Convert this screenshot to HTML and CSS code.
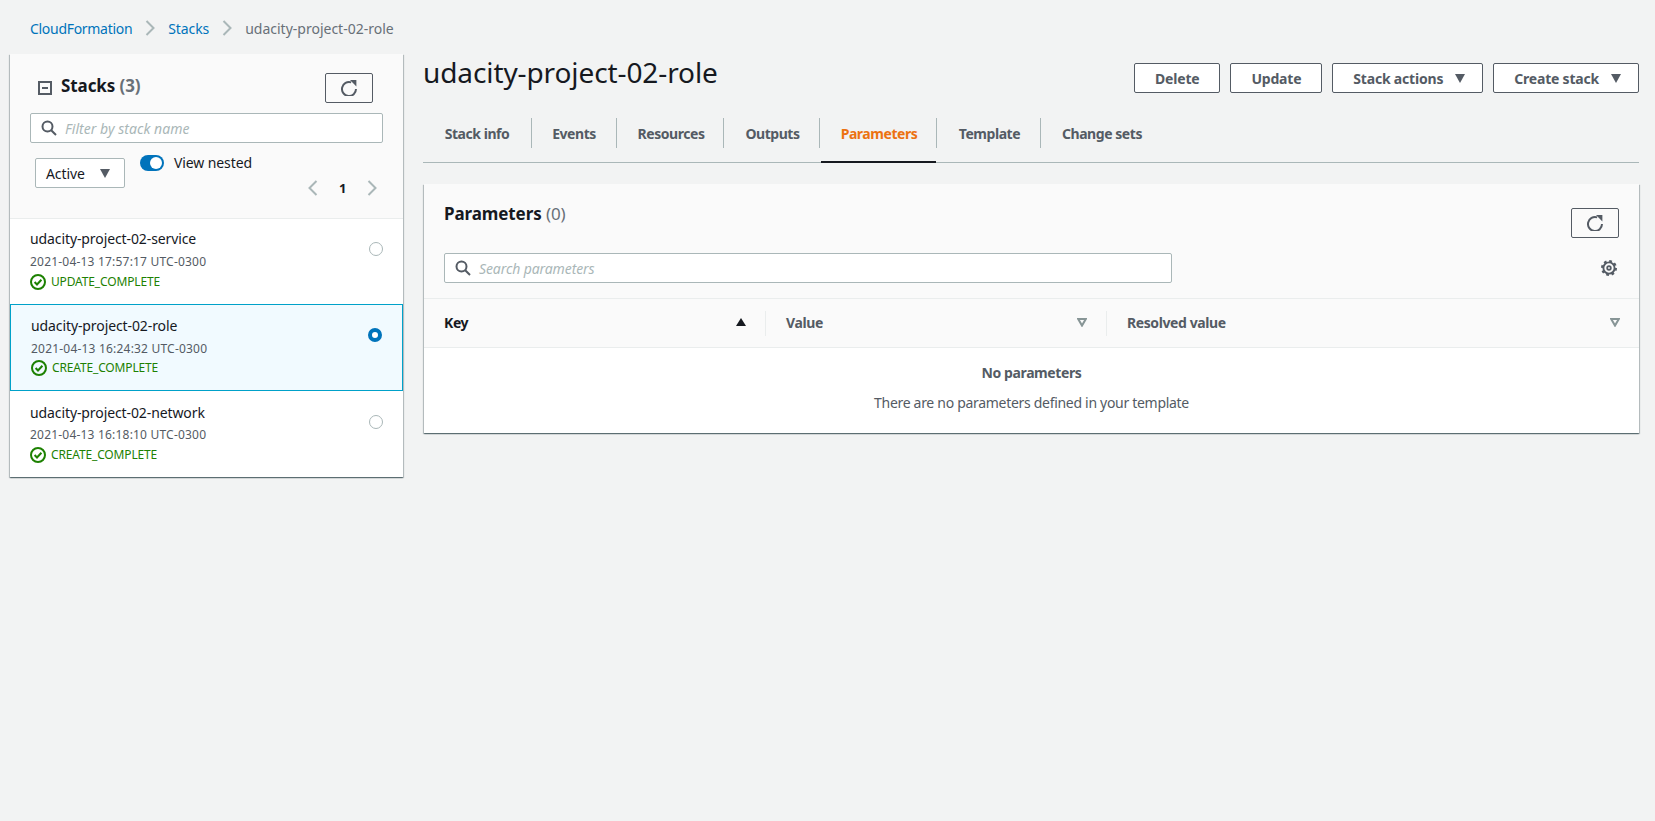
FILE: index.html
```html
<!DOCTYPE html>
<html>

  <head>

    <title>
      udacity-project-02-role
    </title>

    <link rel="stylesheet" href="styles.css">

  </head>

  <body>

    <svg class="defs" width="0" height="0">
      <symbol id="refresh" viewBox="0 0 16 16">
        <path d="M15 9A7 7 0 1 1 10.2 2.4" fill="none" stroke="currentColor" stroke-width="2"/>
        <path d="M9 0h6.4v6.4z" fill="currentColor"/>
      </symbol>
      <symbol id="search" viewBox="0 0 16 16">
        <circle cx="6.5" cy="6.5" r="5" fill="none" stroke="currentColor" stroke-width="2"/>
        <path d="M10.2 10.2L15 15" fill="none" stroke="currentColor" stroke-width="2"/>
      </symbol>
      <symbol id="caret" viewBox="0 0 10 9">
        <path d="M0 0h10L5 9z" fill="currentColor"/>
      </symbol>
      <symbol id="sort" viewBox="0 0 10 9">
        <path d="M1.2 1h7.6L5 7.6z" fill="none" stroke="currentColor" stroke-width="2"/>
      </symbol>
      <symbol id="check" viewBox="0 0 16 16">
        <circle cx="8" cy="8" r="7" fill="none" stroke="currentColor" stroke-width="2"/>
        <path d="M4.6 8l2.4 2.5 4.4-4.7" fill="none" stroke="currentColor" stroke-width="2"/>
      </symbol>
      <symbol id="gear" viewBox="0 0 16 16">
        <circle cx="8" cy="8" r="1.8" fill="none" stroke="currentColor" stroke-width="1.8"/>
        <circle cx="8" cy="8" r="5.6" fill="none" stroke="currentColor" stroke-width="1.9"/>
        <circle cx="8" cy="8" r="6.9" fill="none" stroke="currentColor" stroke-width="2.2" stroke-dasharray="2.7 2.72"/>
      </symbol>
      <symbol id="chevron" viewBox="0 0 10 16">
        <path d="M1.5 1l7 7-7 7" fill="none" stroke="currentColor" stroke-width="2"/>
      </symbol>
    </svg>

    <nav class="breadcrumb">
      <a href="#">CloudFormation</a>
      <svg class="crumbArrow"><use href="#chevron"/></svg>
      <a href="#">Stacks</a>
      <svg class="crumbArrow"><use href="#chevron"/></svg>
      <span>udacity-project-02-role</span>
    </nav>

    <div class="page">

      <aside class="stackPanel">

        <div class="stackHeader">

          <div class="stackTitleRow">
            <span class="collapseBox"></span>
            <h2 class="cardTitle">Stacks <span class="count">(3)</span></h2>
            <button class="btn iconBtn stackRefresh"><svg class="icon16"><use href="#refresh"/></svg></button>
          </div>

          <div class="searchBox stackSearch">
            <svg class="icon16"><use href="#search"/></svg>
            <span>Filter by stack name</span>
          </div>

          <div class="stackControls">
            <div class="select">Active <svg class="caret"><use href="#caret"/></svg></div>
            <span class="toggle"><span class="knob"></span></span>
            <span class="toggleLabel">View nested</span>
            <div class="pager">
              <svg class="pagerArrow flip"><use href="#chevron"/></svg>
              <b>1</b>
              <svg class="pagerArrow"><use href="#chevron"/></svg>
            </div>
          </div>

        </div>

        <div class="stackRow">
          <div class="stackText">
            <div class="stackName">udacity-project-02-service</div>
            <div class="stackDate">2021-04-13 17:57:17 UTC-0300</div>
            <div class="stackStatus"><svg class="icon16"><use href="#check"/></svg>UPDATE_COMPLETE</div>
          </div>
          <span class="radio"></span>
        </div>

        <div class="stackRow selected">
          <div class="stackText">
            <div class="stackName">udacity-project-02-role</div>
            <div class="stackDate">2021-04-13 16:24:32 UTC-0300</div>
            <div class="stackStatus"><svg class="icon16"><use href="#check"/></svg>CREATE_COMPLETE</div>
          </div>
          <span class="radio"></span>
        </div>

        <div class="stackRow lastRow">
          <div class="stackText">
            <div class="stackName">udacity-project-02-network</div>
            <div class="stackDate">2021-04-13 16:18:10 UTC-0300</div>
            <div class="stackStatus"><svg class="icon16"><use href="#check"/></svg>CREATE_COMPLETE</div>
          </div>
          <span class="radio"></span>
        </div>

      </aside>

      <main class="detail">

        <div class="detailHead">
          <h1>udacity-project-02-role</h1>
          <div class="actions">
            <button class="btn">Delete</button>
            <button class="btn">Update</button>
            <button class="btn">Stack actions <svg class="caret"><use href="#caret"/></svg></button>
            <button class="btn">Create stack <svg class="caret"><use href="#caret"/></svg></button>
          </div>
        </div>

        <div class="tabs">
          <a class="tab tabInfo" href="#">Stack info</a>
          <a class="tab tabEvents" href="#">Events</a>
          <a class="tab tabResources" href="#">Resources</a>
          <a class="tab tabOutputs" href="#">Outputs</a>
          <a class="tab tabParameters active" href="#">Parameters</a>
          <a class="tab tabTemplate" href="#">Template</a>
          <a class="tab tabChanges" href="#">Change sets</a>
        </div>

        <section class="card">

          <div class="cardHead">
            <div class="cardHeadTop">
              <h2 class="cardTitle">Parameters <span class="count">(0)</span></h2>
              <button class="btn iconBtn"><svg class="icon16"><use href="#refresh"/></svg></button>
            </div>
            <div class="cardHeadTools">
              <div class="searchBox paramSearch">
                <svg class="icon16"><use href="#search"/></svg>
                <span>Search parameters</span>
              </div>
              <svg class="gear"><use href="#gear"/></svg>
            </div>
          </div>

          <div class="tableHead">
            <div class="col colKey"><span class="keyLabel">Key</span><span class="sortUp"></span></div>
            <div class="col colValue"><span>Value</span><svg class="sortIcon"><use href="#sort"/></svg></div>
            <div class="col colResolved"><span>Resolved value</span><svg class="sortIcon"><use href="#sort"/></svg></div>
          </div>

          <div class="empty">
            <b>No parameters</b>
            <p>There are no parameters defined in your template</p>
          </div>

        </section>

      </main>

    </div>

  </body>

</html>
```

FILE: styles.css
```css
*
{
  box-sizing: border-box;
}

body
{
  margin: 0;
  min-height: 821px;
  background: #f2f3f3;
  color: #16191f;
  font-family: "Noto Sans", sans-serif;
  font-size: 14px;
  letter-spacing: -0.1px;
}

h1, h2, p
{
  margin: 0;
  font-weight: normal;
}

a
{
  text-decoration: none;
}

b
{
  letter-spacing: -0.4px;
}

.defs
{
  display: block;
  height: 0;
}

.icon16
{
  width: 16px;
  height: 16px;
  flex: none;
}

.breadcrumb
{
  display: flex;
  align-items: center;
  height: 54px;
  padding: 2px 0 0 30px;
  color: #687078;
}

.breadcrumb a
{
  color: #0073bb;
}

.breadcrumb a:first-child
{
  letter-spacing: -0.3px;
}

.breadcrumb span
{
  letter-spacing: 0;
}

.crumbArrow
{
  width: 10px;
  height: 16px;
  margin: 0 13px;
  color: #aab7b8;
}

.page
{
  display: flex;
  align-items: flex-start;
  gap: 20px;
  padding: 0 16px 0 10px;
}

.stackPanel
{
  width: 393px;
  flex: none;
  background: #ffffff;
  box-shadow: 0 1px 1px 0 rgba(0, 28, 36, 0.4), 1px 1px 1px 0 rgba(0, 28, 36, 0.2), -1px 1px 1px 0 rgba(0, 28, 36, 0.2);
}

.stackHeader
{
  height: 165px;
  padding-top: 19px;
  background: #fafafa;
  border-bottom: 1px solid #eaeded;
}

.stackTitleRow
{
  display: flex;
  align-items: center;
  height: 30px;
  padding: 0 30px 0 28px;
}

.collapseBox
{
  position: relative;
  width: 14px;
  height: 14px;
  margin-right: 9px;
  border: 2px solid #545b64;
}

.collapseBox::after
{
  content: "";
  position: absolute;
  left: 2px;
  top: 4px;
  width: 6px;
  height: 2px;
  background: #545b64;
}

.cardTitle
{
  font-size: 17px;
  font-weight: bold;
  line-height: 24px;
  letter-spacing: -0.1px;
}

.stackTitleRow .cardTitle
{
  margin-top: -5px;
}

.count
{
  color: #687078;
  font-weight: normal;
}

.stackTitleRow .count
{
  font-weight: bold;
}

.stackRefresh
{
  margin-left: auto;
}

.btn
{
  display: inline-flex;
  align-items: center;
  justify-content: center;
  gap: 12px;
  height: 30px;
  padding: 0 20px;
  background: #ffffff;
  border: 1px solid #545b64;
  border-radius: 2px;
  color: #545b64;
  font-family: inherit;
  font-size: 14px;
  font-weight: bold;
  letter-spacing: -0.2px;
}

.iconBtn
{
  width: 48px;
  padding: 0;
  background: transparent;
}

.caret
{
  width: 10px;
  height: 9px;
  color: #545b64;
}

.btn .caret
{
  margin-right: -3px;
}

.searchBox
{
  display: flex;
  align-items: center;
  gap: 8px;
  height: 30px;
  padding: 0 10px;
  background: #ffffff;
  border: 1px solid #aab7b8;
  border-radius: 2px;
  color: #545b64;
}

.searchBox span
{
  color: #aab7b8;
  font-style: italic;
  line-height: 20px;
  padding-top: 1px;
}

.stackSearch
{
  margin: 10px 20px 0 20px;
}

.stackSearch span
{
  letter-spacing: 0.05px;
}

.stackControls
{
  display: flex;
  align-items: flex-start;
  margin: 12px 26px 0 25px;
}

.select
{
  display: flex;
  align-items: center;
  justify-content: space-between;
  width: 90px;
  height: 30px;
  margin-top: 3px;
  padding: 0 14px 0 10px;
  background: #ffffff;
  border: 1px solid #aab7b8;
  border-radius: 2px;
}

.toggle
{
  display: flex;
  justify-content: flex-end;
  align-items: center;
  width: 24px;
  height: 16px;
  margin-left: 15px;
  padding-right: 2px;
  background: #0073bb;
  border-radius: 8px;
}

.knob
{
  width: 12px;
  height: 12px;
  background: #ffffff;
  border-radius: 50%;
}

.toggleLabel
{
  margin-left: 10px;
  line-height: 16px;
}

.pager
{
  display: flex;
  align-items: center;
  gap: 21px;
  margin: 24px 0 0 auto;
  font-size: 13px;
}

.pagerArrow
{
  width: 10px;
  height: 16px;
  color: #aab7b8;
}

.flip
{
  transform: scaleX(-1);
}

.stackRow
{
  display: flex;
  align-items: flex-start;
  justify-content: space-between;
  height: 85px;
  padding: 10px 20px 0 20px;
}

.stackRow.selected
{
  height: 87px;
  padding-top: 11px;
  padding-left: 20px;
  padding-right: 20px;
  background: #f1faff;
  border: 1px solid #00a1c9;
}

.stackRow.lastRow
{
  height: 86px;
  padding-top: 12px;
}

.stackName
{
  line-height: 20px;
}

.stackDate
{
  margin-top: 3px;
  color: #545b64;
  font-size: 12px;
  line-height: 20px;
  letter-spacing: 0.2px;
}

.lastRow .stackDate
{
  margin-top: 2px;
}

.stackStatus
{
  display: flex;
  align-items: center;
  gap: 5px;
  color: #1d8102;
  font-size: 12px;
  line-height: 20px;
  letter-spacing: -0.15px;
}

.selected .stackStatus
{
  margin-top: -1px;
}

.radio
{
  width: 14px;
  height: 14px;
  margin-top: 13px;
  background: #ffffff;
  border: 1px solid #aab7b8;
  border-radius: 50%;
}

.selected .radio
{
  border: 4px solid #0073bb;
  margin-top: 12px;
}

.lastRow .radio
{
  margin-top: 12px;
}

.detail
{
  flex: 1;
  min-width: 0;
  padding-top: 0;
}

.detailHead
{
  display: flex;
  justify-content: space-between;
  align-items: flex-start;
  height: 64px;
}

h1
{
  font-size: 28px;
  line-height: 36px;
}

.actions
{
  display: flex;
  gap: 10px;
  margin-top: 9px;
}

.tabs
{
  display: flex;
  align-items: flex-start;
  height: 45px;
  border-bottom: 1px solid #aab7b8;
}

.tab
{
  position: relative;
  display: flex;
  align-items: center;
  justify-content: center;
  height: 30px;
  color: #545b64;
  font-weight: bold;
  letter-spacing: -0.45px;
  border-right: 1px solid #aab7b8;
}

.tabInfo
{
  width: 109px;
}

.tabEvents
{
  width: 85px;
}

.tabResources
{
  width: 107px;
  padding-left: 2px;
}

.tabOutputs
{
  width: 96px;
  padding-left: 2px;
}

.tabParameters
{
  width: 117px;
  padding-left: 2px;
}

.tabTemplate
{
  width: 104px;
  padding-left: 2px;
}

.tabChanges
{
  padding: 0 21px;
  border-right: none;
}

.tab.active
{
  color: #ec7211;
}

.tab.active::after
{
  content: "";
  position: absolute;
  left: 1px;
  right: 0;
  bottom: -15px;
  height: 2px;
  background: #16191f;
}

.card
{
  margin: 21px 0 0 1px;
  background: #ffffff;
  box-shadow: 0 1px 1px 0 rgba(0, 28, 36, 0.4), 1px 1px 1px 0 rgba(0, 28, 36, 0.2), -1px 1px 1px 0 rgba(0, 28, 36, 0.2);
}

.cardHead
{
  height: 115px;
  padding: 18px 20px 0 20px;
  background: #fafafa;
  border-bottom: 1px solid #eaeded;
}

.cardHeadTop
{
  display: flex;
  justify-content: space-between;
  align-items: flex-start;
  height: 51px;
}

.cardHeadTop .btn
{
  margin-top: 6px;
}

.cardHeadTools
{
  display: flex;
  justify-content: space-between;
  align-items: center;
}

.paramSearch
{
  width: 728px;
}

.gear
{
  width: 16px;
  height: 16px;
  margin-right: 2px;
  color: #545b64;
}

.tableHead
{
  display: flex;
  height: 49px;
  background: #fafafa;
  border-bottom: 1px solid #eaeded;
  color: #545b64;
  font-weight: bold;
  letter-spacing: -0.4px;
  align-items: center;
}

.col
{
  display: flex;
  align-items: center;
  justify-content: space-between;
  height: 25px;
  padding: 0 19px 2px 20px;
  border-right: 1px solid #eaeded;
}

.colKey
{
  width: 342px;
  padding-left: 20px;
  padding-right: 18px;
}

.colValue
{
  width: 341px;
}

.colResolved
{
  flex: 1;
  border-right: none;
}

.keyLabel
{
  color: #16191f;
}

.sortUp
{
  width: 0;
  height: 0;
  margin-right: 1px;
  border-left: 5px solid transparent;
  border-right: 5px solid transparent;
  border-bottom: 8px solid #16191f;
}

.sortIcon
{
  width: 10px;
  height: 9px;
  color: #879596;
}

.empty
{
  height: 85px;
  padding-top: 15px;
  text-align: center;
  color: #545b64;
}

.empty b, .empty p
{
  display: block;
  line-height: 20px;
}

.empty p
{
  margin-top: 10px;
  letter-spacing: -0.3px;
}
```
